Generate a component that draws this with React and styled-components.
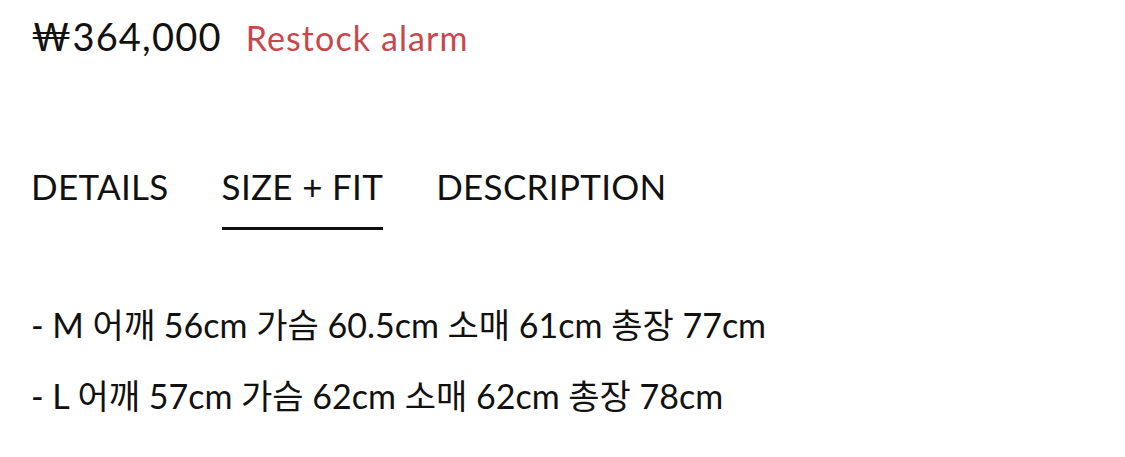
import React from "react"
import styled, { createGlobalStyle } from "styled-components"

const GlobalStyle = createGlobalStyle`
  html, body {
    margin: 0;
    padding: 0;
    background: #ffffff;
  }
  body {
    font-family: Lato, "Noto Sans CJK KR", sans-serif;
    color: #111111;
  }
`

const Wrapper = styled.div`
  width: 1125px;
  height: 457px;
  box-sizing: border-box;
  padding: 8px 0 0 31px;
  overflow: hidden;
`

const PriceRow = styled.div`
  display: flex;
  align-items: baseline;
  gap: 24px;
  height: 56px;
`

const Price = styled.span`
  font-size: 38px;
  line-height: 56px;
  letter-spacing: 1.2px;
  color: #111111;
`

const RestockLink = styled.a`
  font-size: 34px;
  letter-spacing: 1.1px;
  color: #c8474d;
  text-decoration: none;
  cursor: pointer;
`

const Tabs = styled.ul`
  list-style: none;
  margin: 100px 0 0;
  padding: 0;
  display: flex;
  gap: 53px;
`

const Tab = styled.li`
  position: relative;
  font-size: 35px;
  line-height: 44px;
  letter-spacing: 0.3px;
  padding-bottom: 22px;
  cursor: pointer;

  &.active:after {
    content: "";
    position: absolute;
    left: 0;
    right: 0;
    bottom: 0;
    height: 3px;
    background: #111111;
  }
`

const SizeList = styled.ul`
  list-style: none;
  margin: 59px 0 0;
  padding: 0;
`

const SizeLine = styled.li`
  font-size: 34px;
  line-height: 71px;
`

const sizes = [
  "- M 어깨 56cm 가슴 60.5cm 소매 61cm 총장 77cm",
  "- L 어깨 57cm 가슴 62cm 소매 62cm 총장 78cm",
]

export default function App() {
  return (
    <Wrapper>
      <GlobalStyle />
      <PriceRow>
        <Price>₩364,000</Price>
        <RestockLink>Restock alarm</RestockLink>
      </PriceRow>
      <Tabs>
        <Tab>DETAILS</Tab>
        <Tab className="active">SIZE + FIT</Tab>
        <Tab>DESCRIPTION</Tab>
      </Tabs>
      <SizeList>
        {sizes.map((s) => (
          <SizeLine key={s}>{s}</SizeLine>
        ))}
      </SizeList>
    </Wrapper>
  )
}
